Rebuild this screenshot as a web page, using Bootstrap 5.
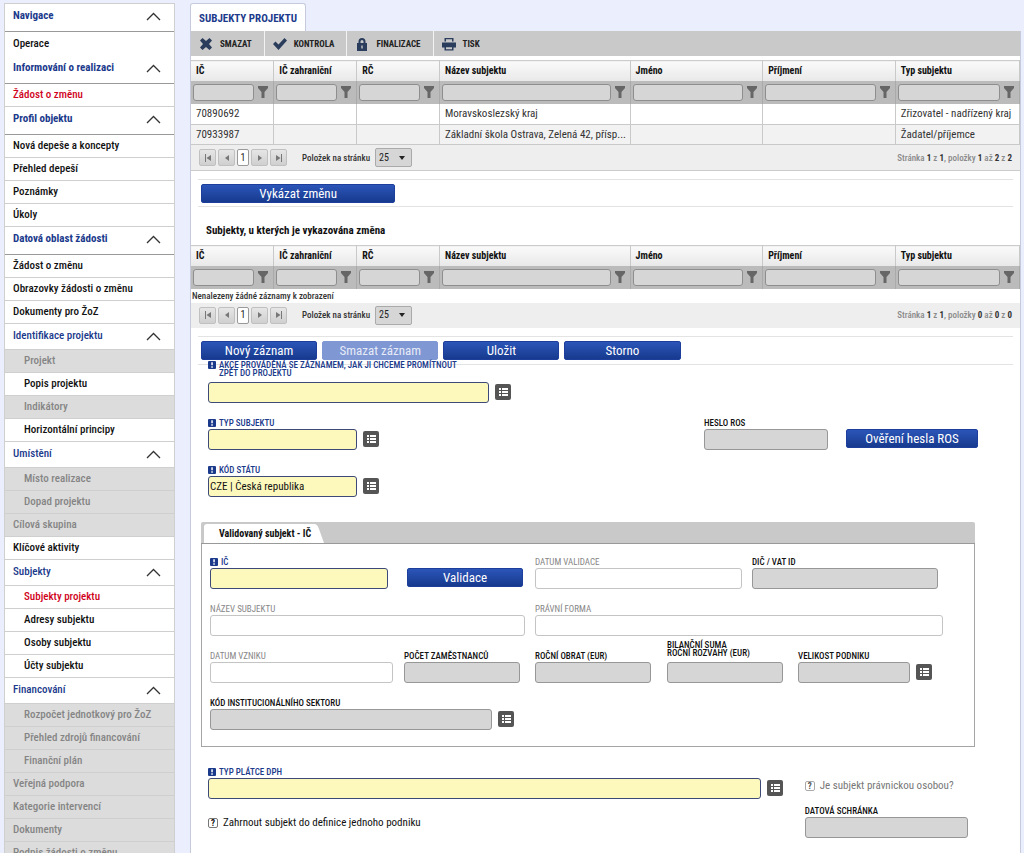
<!DOCTYPE html>
<html lang="cs">
<head>
<meta charset="utf-8">
<meta name="viewport" content="width=device-width, initial-scale=1">
<title>Subjekty projektu</title>
<link href="https://cdn.jsdelivr.net/npm/bootstrap@5.3.0/dist/css/bootstrap.min.css" rel="stylesheet">
<style>
:root{--navy:#1b3a8c;--grey:#d6d6d6}
body{font-family:"Roboto Condensed","Liberation Sans Narrow",Roboto,sans-serif;font-size:11px;line-height:16px;color:#111;background:#ebeefc}
.app{gap:15px;padding:3px 3px 0 4px}
.scroller{overflow:auto;scrollbar-width:none}
/* side menu */
.side{width:171px;background:#fff;border:1px solid #cfcfcf;border-bottom:0;font-weight:500}
.side a,.side button{display:flex;align-items:center;width:100%;height:23px;padding:0 8px;border:0;border-bottom:1px solid #cfcfcf;background:#fff;color:#111;text-decoration:none;text-align:left;white-space:nowrap}
.side button{justify-content:space-between;height:26px;padding-right:13px;padding-bottom:1px;color:var(--navy);font-weight:500}
.side button.main-head{height:28px;padding-bottom:3px;border-bottom-color:#999;font-weight:700}
.side button svg{width:15px;height:9px}
.side a.tall{height:24px;border-bottom:0}
.side a.sub{padding-left:19px}
.side a.off{background:#dcdcdc;color:#858585}
.side a.now{color:#d0021b}
/* working area */
.sheet{background:#fff;border:1px solid #c6cbdb;border-width:0 1px}
.tab-top{height:28px;padding:2px 8px 0;border:1px solid #c6cbdb;border-bottom:0;border-radius:3px 3px 0 0;background:#fff;color:var(--navy);font-weight:700;display:inline-flex;align-items:center;text-decoration:none}
.tools{background:#c9c9c9;height:25px;margin-bottom:4px}
.tools button{display:flex;align-items:center;gap:7px;border:0;border-right:1px solid #f3f3f3;background:none;padding:0 12px 0 8px;font-size:9px;font-weight:700;color:#222}
.tools button:last-child{border:0}
.tools svg{width:14px;height:14px;color:#2b3d5c}
/* grids */
.grid{width:100%;table-layout:fixed;margin:0}
.grid th,.grid td{border-right:1px solid #c9c9c9;padding:0 5px;height:20px;overflow:hidden;white-space:nowrap}
.grid thead .heads th{height:20px;font-size:10px;font-weight:700;border-top:1px solid #ccc;background:linear-gradient(#fafafa,#e8e8e8)}
.grid .filters th{height:23px;background:#bbb;border-color:#aaa;padding:0 5px 0 2px}
.grid .filters input{width:10px;height:17px;min-height:0;padding:0 3px;border:1px solid #8e8e8e;border-radius:3px;background:var(--grey);font-size:11px}
.grid .filters button{border:0;background:none;padding:0;width:10px;height:12px;line-height:0;color:#666}
.grid tbody td{height:21px;border-bottom:1px solid #c9c9c9;color:#333}
.grid tbody tr:nth-child(even) td{background:#f2f2f2;height:20px}
.grid tbody td.blank{height:14px;padding:0 0 0 1px;border:0;font-size:9px;line-height:14px;font-weight:500;background:#fff}
.w10{width:10%}.w23{width:23%}.w16{width:16%}.w15{width:15%}
.pager{height:25px;gap:2px;background:#eee;padding:0 8px;font-size:9px;font-weight:500;color:#333}
.pager.lined{height:26px;border-bottom:1px solid #ccc}
.pager button{width:17px;height:17px;border:1px solid #c0c0c0;border-radius:2px;background:linear-gradient(#e6e6e6,#cfcfcf);padding:0;line-height:0;color:#777}
.pager button svg{width:8px;height:8px}
.pager button.here{width:12px;background:#fff;border-color:#999;color:#222;font-size:10px;line-height:14px}
.pager label{margin:0 3px 0 13px}
.pager select{width:37px;height:19px;padding:0 3px;border:1px solid #aaa;border-radius:2px;font-size:10px;color:#222;appearance:none;background:#d6d6d6 url("data:image/svg+xml,%3Csvg xmlns='http://www.w3.org/2000/svg' viewBox='0 0 6 4'%3E%3Cpath d='M0 0h6L3 4z' fill='%23222'/%3E%3C/svg%3E") no-repeat right 6px center/6px 4px}
.pager .range{color:#8a8a8a}
.pager .range b{color:#333;font-weight:700}
.strip{margin:8px 7px 0;padding:4px 0 3px 3px;border:1px solid #e3e3e3;border-width:1px 0}
.report{grid-template-columns:194fr 617fr}
.acts{grid-template-columns:repeat(4,116fr) 327fr;column-gap:5px;padding-bottom:4px}
.act{height:19px;padding:0;border:1px solid #1d3f9b;border-radius:2px;background:linear-gradient(#2b55b8,#173a8e);color:#fff;font-size:13px;line-height:17px;min-width:0}
.act:disabled{background:#7f97d3;border-color:#7f97d3;color:#e6ebf8;opacity:1}
.lift{margin-bottom:2px}
.list-title{font-size:11px;line-height:16px;font-weight:700;margin:16px 15px 6px}
/* form */
.top-form{margin:-4px 42px 0 17px}
.fields{display:grid;align-items:end;margin-bottom:16px}
.fields>*{min-width:0}
.fields .cap{display:flex;gap:3px;margin:0 0 2px;font-size:9px;line-height:8px;font-weight:500;color:#111;white-space:nowrap}
.fields .cap.two{margin-bottom:5px}
.fields .cap.rise{margin-top:-11px}
.fields .cap.must{color:var(--navy)}
.fields .cap.dim{color:#868686;font-weight:400}
.cap svg{width:8px;height:8px;flex:none}
.box{height:21px;min-height:0;padding:0 1px;border:1px solid #979797;border-radius:3px;background:var(--grey);font-size:11px;line-height:19px;color:#111;min-width:0}
.box.must{background:#fdf9bd;border-color:#3d4a78}
.box.dim{background:#fff;border-color:#c4c4c4}
.pick{width:16px;height:16px;flex:none;border:0;border-radius:2px;background:#555;padding:0;margin-left:6px;line-height:0}
.question{gap:5px}
.ask{appearance:none;width:10px;height:10px;flex:none;margin:0;border:1px solid #777;border-radius:2px;background:#fff;display:grid;place-items:center}
.ask::before{content:"?";font-size:9px;line-height:8px;font-weight:700;color:#111}
.ask:disabled{border-color:#aaa}
.ask:disabled::before{color:#555}
.ask:disabled+label{color:#777}
.g1{grid-template-columns:303fr 467fr}
.g2{grid-template-columns:171fr 325fr 124fr 18fr 132fr}
.bundle{margin:25px 45px 0 10px}
.bundle-bar{height:22px;background:#c9c9c9;border-bottom:1px solid #999;padding:2px 3px 0;border-radius:2px 2px 0 0}
.bundle-bar a{position:relative;display:inline-block;height:19px;padding:0 2px 0 15px;background:#fff;border-radius:3px 0 0 0;color:#111;font-size:10px;line-height:19px;font-weight:700;text-decoration:none}
.bundle-bar svg{position:absolute;left:100%;top:0}
.bundle-body{border:1px solid #a5a5a5;border-top:0;padding:14px 31px 0 8px}
.i1{grid-template-columns:178fr 19fr 116fr 12fr 207fr 10fr 186fr 5fr}
.i2{grid-template-columns:315fr 10fr 408fr}
.i3{grid-template-columns:183fr 11fr 116fr 15fr 116fr 16fr 116fr 15fr 134fr 11fr}
.i4{grid-template-columns:304fr 429fr}
.low{display:grid;grid-template-columns:574fr 22fr 163fr;margin:21px 52px 0 17px}
.low>*{min-width:0}
.low-right{padding-top:10px}
.low-right .fields{margin-top:13px}
</style>
</head>
<body>
<svg class="d-none" aria-hidden="true">
<symbol id="up" viewBox="0 0 15 9"><path d="M1 8l6.500-6.500L14 8" fill="none" stroke="#333" stroke-width="1.300"/></symbol>
<symbol id="funnel" viewBox="0 0 10 12"><path d="M0 0h10v2L6.500 6v6h-3V6L0 2z" fill="currentColor"/></symbol>
<symbol id="first" viewBox="0 0 8 8"><path d="M1 0h1v8H1zM7 1v6L2.500 4z" fill="currentColor"/></symbol>
<symbol id="prev" viewBox="0 0 8 8"><path d="M6 1v6L2 4z" fill="currentColor"/></symbol>
<symbol id="next" viewBox="0 0 8 8"><path d="M2 1v6l4-3z" fill="currentColor"/></symbol>
<symbol id="last" viewBox="0 0 8 8"><path d="M6 0h1v8H6zM1 1v6l4.500-3z" fill="currentColor"/></symbol>
<symbol id="list" viewBox="0 0 16 16"><path d="M4 4h2v2H4zM7 4h6v2H7zM4 7h2v2H4zM7 7h6v2H7zM4 10h2v2H4zM7 10h6v2H7z" fill="#fff"/></symbol>
<symbol id="bang" viewBox="0 0 8 8"><rect width="8" height="8" rx="1" fill="#1b3a8c"/><path d="M3.300 1.300h1.500v3H3.300zM3.300 5.300h1.500v1.400H3.300z" fill="#fff"/></symbol>
</svg>

<div class="app d-flex vh-100 overflow-hidden">
<nav class="side scroller flex-shrink-0" aria-label="Navigace">
<button class="main-head" type="button">Navigace<svg><use href="#up"/></svg></button>
<a class="tall" href="#">Operace</a>
<button class="main-head" type="button">Informování o realizaci<svg><use href="#up"/></svg></button>
<a class="now" href="#">Žádost o změnu</a>
<button class="main-head" type="button">Profil objektu<svg><use href="#up"/></svg></button>
<a href="#">Nová depeše a koncepty</a>
<a href="#">Přehled depeší</a>
<a href="#">Poznámky</a>
<a href="#">Úkoly</a>
<button class="main-head" type="button">Datová oblast žádosti<svg><use href="#up"/></svg></button>
<a href="#">Žádost o změnu</a>
<a href="#">Obrazovky žádosti o změnu</a>
<a href="#">Dokumenty pro ŽoZ</a>
<button type="button">Identifikace projektu<svg><use href="#up"/></svg></button>
<a class="sub off" href="#">Projekt</a>
<a class="sub" href="#">Popis projektu</a>
<a class="sub off" href="#">Indikátory</a>
<a class="sub" href="#">Horizontální principy</a>
<button type="button">Umístění<svg><use href="#up"/></svg></button>
<a class="sub off" href="#">Místo realizace</a>
<a class="sub off" href="#">Dopad projektu</a>
<a class="off" href="#">Cílová skupina</a>
<a href="#">Klíčové aktivity</a>
<button type="button">Subjekty<svg><use href="#up"/></svg></button>
<a class="sub now" href="#">Subjekty projektu</a>
<a class="sub" href="#">Adresy subjektu</a>
<a class="sub" href="#">Osoby subjektu</a>
<a class="sub" href="#">Účty subjektu</a>
<button type="button">Financování<svg><use href="#up"/></svg></button>
<a class="sub off" href="#">Rozpočet jednotkový pro ŽoZ</a>
<a class="sub off" href="#">Přehled zdrojů financování</a>
<a class="sub off" href="#">Finanční plán</a>
<a class="off" href="#">Veřejná podpora</a>
<a class="off" href="#">Kategorie intervencí</a>
<a class="off" href="#">Dokumenty</a>
<a class="off" href="#">Podpis žádosti o změnu</a>
</nav>

<main class="d-flex flex-column flex-grow-1 overflow-hidden">
<div class="d-flex"><a class="tab-top" href="#">SUBJEKTY PROJEKTU</a></div>
<div class="sheet scroller flex-grow-1">
<div class="tools d-flex">
<button type="button"><svg viewBox="0 0 14 14"><path d="M3.500 1L7 4l3.500-3L13 3.500 10 7l3 3.500-2.500 2.500L7 10l-3.500 3L1 10.500 4 7 1 3.500z" fill="currentColor"/></svg>SMAZAT</button>
<button type="button"><svg viewBox="0 0 14 14"><path d="M0 7l2.500-2.500L5.500 7.500 11.500 1 14 3.500 5.500 13z" fill="currentColor"/></svg>KONTROLA</button>
<button type="button"><svg viewBox="0 0 14 14"><path d="M3.500 6V4.500a3.500 3.500 0 017 0V6H12v8H2V6zm2 0h3V4.500a1.500 1.500 0 00-3 0zM6.300 8.500v3h1.400v-3z" fill="currentColor" fill-rule="evenodd"/></svg>FINALIZACE</button>
<button type="button"><svg viewBox="0 0 14 14"><path d="M2.500 1h9v3.500h-9zM4 2.300v2.200h6V2.300zM0 5.500h14v5h-2.500V9h-9v1.500H0zM2.500 9h9v4.500h-9zM4 10.300v1.900h6v-1.900z" fill="currentColor" fill-rule="evenodd"/></svg>TISK</button>
</div>

<table class="grid">
<colgroup><col class="w10"><col class="w10"><col class="w10"><col class="w23"><col class="w16"><col class="w16"><col class="w15"></colgroup>
<thead>
<tr class="heads"><th>IČ</th><th>IČ zahraniční</th><th>RČ</th><th>Název subjektu</th><th>Jméno</th><th>Příjmení</th><th>Typ subjektu</th></tr>
<tr class="filters">
<th><div class="d-flex align-items-center gap-1"><input class="flex-grow-1" aria-label="IČ"><button type="button" aria-label="Filtr"><svg width="10" height="12"><use href="#funnel"/></svg></button></div></th>
<th><div class="d-flex align-items-center gap-1"><input class="flex-grow-1" aria-label="IČ zahraniční"><button type="button" aria-label="Filtr"><svg width="10" height="12"><use href="#funnel"/></svg></button></div></th>
<th><div class="d-flex align-items-center gap-1"><input class="flex-grow-1" aria-label="RČ"><button type="button" aria-label="Filtr"><svg width="10" height="12"><use href="#funnel"/></svg></button></div></th>
<th><div class="d-flex align-items-center gap-1"><input class="flex-grow-1" aria-label="Název subjektu"><button type="button" aria-label="Filtr"><svg width="10" height="12"><use href="#funnel"/></svg></button></div></th>
<th><div class="d-flex align-items-center gap-1"><input class="flex-grow-1" aria-label="Jméno"><button type="button" aria-label="Filtr"><svg width="10" height="12"><use href="#funnel"/></svg></button></div></th>
<th><div class="d-flex align-items-center gap-1"><input class="flex-grow-1" aria-label="Příjmení"><button type="button" aria-label="Filtr"><svg width="10" height="12"><use href="#funnel"/></svg></button></div></th>
<th><div class="d-flex align-items-center gap-1"><input class="flex-grow-1" aria-label="Typ subjektu"><button type="button" aria-label="Filtr"><svg width="10" height="12"><use href="#funnel"/></svg></button></div></th>
</tr>
</thead>
<tbody>
<tr><td>70890692</td><td></td><td></td><td>Moravskoslezský kraj</td><td></td><td></td><td>Zřizovatel - nadřízený kraj</td></tr>
<tr><td>70933987</td><td></td><td></td><td>Základní škola Ostrava, Zelená 42, přísp...</td><td></td><td></td><td>Žadatel/příjemce</td></tr>
</tbody>
</table>
<div class="pager lined d-flex align-items-center">
<button type="button" aria-label="První"><svg><use href="#first"/></svg></button>
<button type="button" aria-label="Předchozí"><svg><use href="#prev"/></svg></button>
<button class="here" type="button">1</button>
<button type="button" aria-label="Další"><svg><use href="#next"/></svg></button>
<button type="button" aria-label="Poslední"><svg><use href="#last"/></svg></button>
<label for="size1">Položek na stránku</label>
<select id="size1"><option>25</option></select>
<span class="range ms-auto">Stránka <b>1</b> z <b>1</b>, položky <b>1</b> až <b>2</b> z <b>2</b></span>
</div>

<div class="strip d-grid report"><button class="act" type="button">Vykázat změnu</button></div>
<h2 class="list-title">Subjekty, u kterých je vykazována změna</h2>

<table class="grid">
<colgroup><col class="w10"><col class="w10"><col class="w10"><col class="w23"><col class="w16"><col class="w16"><col class="w15"></colgroup>
<thead>
<tr class="heads"><th>IČ</th><th>IČ zahraniční</th><th>RČ</th><th>Název subjektu</th><th>Jméno</th><th>Příjmení</th><th>Typ subjektu</th></tr>
<tr class="filters">
<th><div class="d-flex align-items-center gap-1"><input class="flex-grow-1" aria-label="IČ"><button type="button" aria-label="Filtr"><svg width="10" height="12"><use href="#funnel"/></svg></button></div></th>
<th><div class="d-flex align-items-center gap-1"><input class="flex-grow-1" aria-label="IČ zahraniční"><button type="button" aria-label="Filtr"><svg width="10" height="12"><use href="#funnel"/></svg></button></div></th>
<th><div class="d-flex align-items-center gap-1"><input class="flex-grow-1" aria-label="RČ"><button type="button" aria-label="Filtr"><svg width="10" height="12"><use href="#funnel"/></svg></button></div></th>
<th><div class="d-flex align-items-center gap-1"><input class="flex-grow-1" aria-label="Název subjektu"><button type="button" aria-label="Filtr"><svg width="10" height="12"><use href="#funnel"/></svg></button></div></th>
<th><div class="d-flex align-items-center gap-1"><input class="flex-grow-1" aria-label="Jméno"><button type="button" aria-label="Filtr"><svg width="10" height="12"><use href="#funnel"/></svg></button></div></th>
<th><div class="d-flex align-items-center gap-1"><input class="flex-grow-1" aria-label="Příjmení"><button type="button" aria-label="Filtr"><svg width="10" height="12"><use href="#funnel"/></svg></button></div></th>
<th><div class="d-flex align-items-center gap-1"><input class="flex-grow-1" aria-label="Typ subjektu"><button type="button" aria-label="Filtr"><svg width="10" height="12"><use href="#funnel"/></svg></button></div></th>
</tr>
</thead>
<tbody><tr><td class="blank" colspan="7">Nenalezeny žádné záznamy k zobrazení</td></tr></tbody>
</table>
<div class="pager d-flex align-items-center">
<button type="button" aria-label="První"><svg><use href="#first"/></svg></button>
<button type="button" aria-label="Předchozí"><svg><use href="#prev"/></svg></button>
<button class="here" type="button">1</button>
<button type="button" aria-label="Další"><svg><use href="#next"/></svg></button>
<button type="button" aria-label="Poslední"><svg><use href="#last"/></svg></button>
<label for="size2">Položek na stránku</label>
<select id="size2"><option>25</option></select>
<span class="range ms-auto">Stránka <b>1</b> z <b>1</b>, položky <b>0</b> až <b>0</b> z <b>0</b></span>
</div>

<div class="strip d-grid acts">
<button class="act" type="button">Nový záznam</button>
<button class="act" type="button" disabled>Smazat záznam</button>
<button class="act" type="button">Uložit</button>
<button class="act" type="button">Storno</button>
</div>

<form class="top-form">
<div class="fields g1"><div>
<label class="cap must two" for="f1"><svg><use href="#bang"/></svg><span>AKCE PROVÁDĚNÁ SE ZÁZNAMEM, JAK JI CHCEME PROMÍTNOUT<br>ZPĚT DO PROJEKTU</span></label>
<div class="d-flex align-items-center"><input id="f1" class="box must flex-grow-1"><button class="pick" type="button" aria-label="Vybrat"><svg width="16" height="16"><use href="#list"/></svg></button></div></div></div>
<div class="fields g2"><div>
<label class="cap must" for="f2"><svg><use href="#bang"/></svg>TYP SUBJEKTU</label>
<div class="d-flex align-items-center"><input id="f2" class="box must flex-grow-1"><button class="pick" type="button" aria-label="Vybrat"><svg width="16" height="16"><use href="#list"/></svg></button></div></div>
<span></span>
<div><label class="cap" for="f3">HESLO ROS</label><input id="f3" class="box w-100 d-block"></div>
<span></span>
<button class="act lift" type="button">Ověření hesla ROS</button></div>
<div class="fields g2"><div>
<label class="cap must" for="f4"><svg><use href="#bang"/></svg>KÓD STÁTU</label>
<div class="d-flex align-items-center"><input id="f4" class="box must flex-grow-1" value="CZE | Česká republika"><button class="pick" type="button" aria-label="Vybrat"><svg width="16" height="16"><use href="#list"/></svg></button></div></div></div>
</form>

<section class="bundle">
<div class="bundle-bar"><a href="#">Validovaný subjekt - IČ<svg width="12" height="19" viewBox="0 0 12 19"><path d="M0 0c4 0 5 2 6 5l5 14H0z" fill="#fff"/></svg></a></div>
<div class="bundle-body">
<div class="fields i1">
<div><label class="cap must" for="i1"><svg><use href="#bang"/></svg>IČ</label><input id="i1" class="box must w-100 d-block"></div><span></span>
<button class="act lift" type="button">Validace</button><span></span>
<div><label class="cap dim" for="i2">DATUM VALIDACE</label><input id="i2" class="box dim w-100 d-block" readonly></div><span></span>
<div><label class="cap" for="i3">DIČ / VAT ID</label><input id="i3" class="box w-100 d-block"></div></div>
<div class="fields i2">
<div><label class="cap dim" for="i4">NÁZEV SUBJEKTU</label><input id="i4" class="box dim w-100 d-block" readonly></div><span></span>
<div><label class="cap dim" for="i5">PRÁVNÍ FORMA</label><input id="i5" class="box dim w-100 d-block" readonly></div></div>
<div class="fields i3">
<div><label class="cap dim" for="i6">DATUM VZNIKU</label><input id="i6" class="box dim w-100 d-block" readonly></div><span></span>
<div><label class="cap" for="i7">POČET ZAMĚSTNANCŮ</label><input id="i7" class="box w-100 d-block"></div><span></span>
<div><label class="cap" for="i8">ROČNÍ OBRAT (EUR)</label><input id="i8" class="box w-100 d-block"></div><span></span>
<div><label class="cap two rise" for="i9"><span>BILANČNÍ SUMA<br>ROČNÍ ROZVAHY (EUR)</span></label><input id="i9" class="box w-100 d-block"></div><span></span>
<div><label class="cap" for="i10">VELIKOST PODNIKU</label><div class="d-flex align-items-center"><input id="i10" class="box flex-grow-1"><button class="pick" type="button" aria-label="Vybrat"><svg width="16" height="16"><use href="#list"/></svg></button></div></div></div>
<div class="fields i4"><div>
<label class="cap" for="i11">KÓD INSTITUCIONÁLNÍHO SEKTORU</label>
<div class="d-flex align-items-center"><input id="i11" class="box flex-grow-1"><button class="pick" type="button" aria-label="Vybrat"><svg width="16" height="16"><use href="#list"/></svg></button></div></div></div>
</div>
</section>

<div class="low">
<div>
<div class="fields"><div>
<label class="cap must" for="l1"><svg><use href="#bang"/></svg>TYP PLÁTCE DPH</label>
<div class="d-flex align-items-center"><input id="l1" class="box must flex-grow-1"><button class="pick" type="button" aria-label="Vybrat"><svg width="16" height="16"><use href="#list"/></svg></button></div></div></div>
<div class="d-flex align-items-center question"><input class="ask" type="checkbox" id="q1"><label for="q1">Zahrnout subjekt do definice jednoho podniku</label></div>
</div>
<span></span>
<div class="low-right">
<div class="d-flex align-items-center question text-nowrap"><input class="ask" type="checkbox" id="q2" disabled><label for="q2">Je subjekt právnickou osobou?</label></div>
<div class="fields"><div><label class="cap" for="l2">DATOVÁ SCHRÁNKA</label><input id="l2" class="box w-100 d-block"></div></div>
</div>
</div>
</div>
</main>
</div>
<script src="https://cdn.jsdelivr.net/npm/bootstrap@5.3.0/dist/js/bootstrap.bundle.min.js"></script>
</body>
</html>
